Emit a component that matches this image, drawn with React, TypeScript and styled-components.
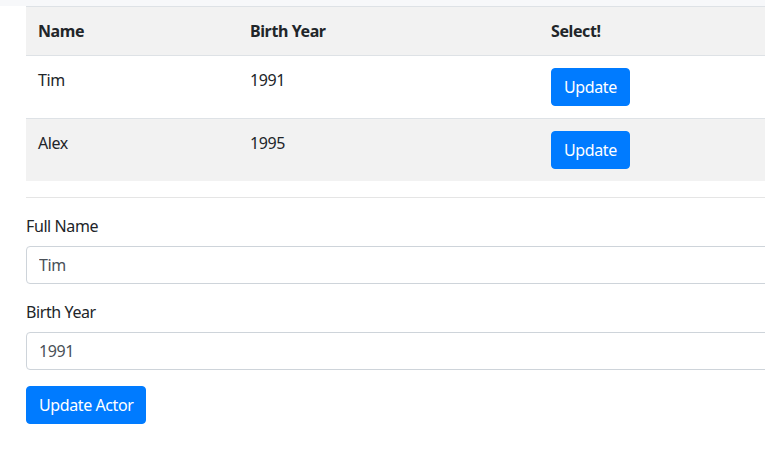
import React from "react";
import styled, { createGlobalStyle } from "styled-components";

const Global = createGlobalStyle`
  html, body { margin: 0; padding: 0; overflow: hidden; background: #fff; }
  body {
    font-family: "Noto Sans", "Open Sans", sans-serif;
    font-size: 16px;
    line-height: 1.5;
    letter-spacing: -0.4px;
    color: #212529;
  }
  * { box-sizing: border-box; }
`;

const TopStrip = styled.div`
  height: 6px;
  background: #f7f8fa;
`;

const Page = styled.div`
  width: 940px;
  padding-left: 26px;
  display: flex;
  flex-direction: column;
`;

const Table = styled.table`
  width: 100%;
  border-collapse: collapse;
  table-layout: fixed;
  margin-bottom: 16px;
`;

const Row = styled.tr<{ $striped?: boolean }>`
  background: ${(p) => (p.$striped ? "#f2f2f2" : "#fff")};
`;

const Th = styled.th`
  text-align: left;
  font-weight: 700;
  padding: 12px;
  border-top: 1px solid #dee2e6;
  vertical-align: top;
`;

const Td = styled.td`
  padding: 12px;
  border-top: 1px solid #dee2e6;
  vertical-align: top;
`;

const Button = styled.button`
  font-family: inherit;
  font-size: 16px;
  line-height: 24px;
  letter-spacing: -0.4px;
  padding: 6px 12px;
  border: 1px solid #007bff;
  background: #007bff;
  color: #fff;
  border-radius: 4px;
  cursor: pointer;
  display: inline-block;
`;

const Divider = styled.hr`
  margin: 0 0 16px 0;
  border: 0;
  border-top: 1px solid rgba(0, 0, 0, 0.1);
  height: 0;
`;

const FormGroup = styled.div`
  display: flex;
  flex-direction: column;
  margin-bottom: 16px;
`;

const Label = styled.label`
  margin-bottom: 8px;
  line-height: 24px;
`;

const Input = styled.input`
  font-family: inherit;
  font-size: 16px;
  line-height: 24px;
  letter-spacing: -0.4px;
  height: 38px;
  padding: 6px 12px;
  color: #495057;
  border: 1px solid #ced4da;
  border-radius: 4px;
  width: 100%;
  background: #fff;
  outline: none;
`;

const Actions = styled.div`
  display: flex;
`;

const actors = [
  { name: "Tim", year: "1991" },
  { name: "Alex", year: "1995" },
];

export default function App() {
  return (
    <>
      <Global />
      <TopStrip />
      <Page>
        <Table>
          <colgroup>
            <col style={{ width: 212 }} />
            <col style={{ width: 301 }} />
            <col />
          </colgroup>
          <thead>
            <Row $striped>
              <Th>Name</Th>
              <Th>Birth Year</Th>
              <Th>Select!</Th>
            </Row>
          </thead>
          <tbody>
            {actors.map((a, i) => (
              <Row key={a.name} $striped={i % 2 === 1}>
                <Td>{a.name}</Td>
                <Td>{a.year}</Td>
                <Td>
                  <Button>Update</Button>
                </Td>
              </Row>
            ))}
          </tbody>
        </Table>
        <Divider />
        <FormGroup>
          <Label>Full Name</Label>
          <Input defaultValue="Tim" />
        </FormGroup>
        <FormGroup>
          <Label>Birth Year</Label>
          <Input defaultValue="1991" />
        </FormGroup>
        <Actions>
          <Button>Update Actor</Button>
        </Actions>
      </Page>
    </>
  );
}
